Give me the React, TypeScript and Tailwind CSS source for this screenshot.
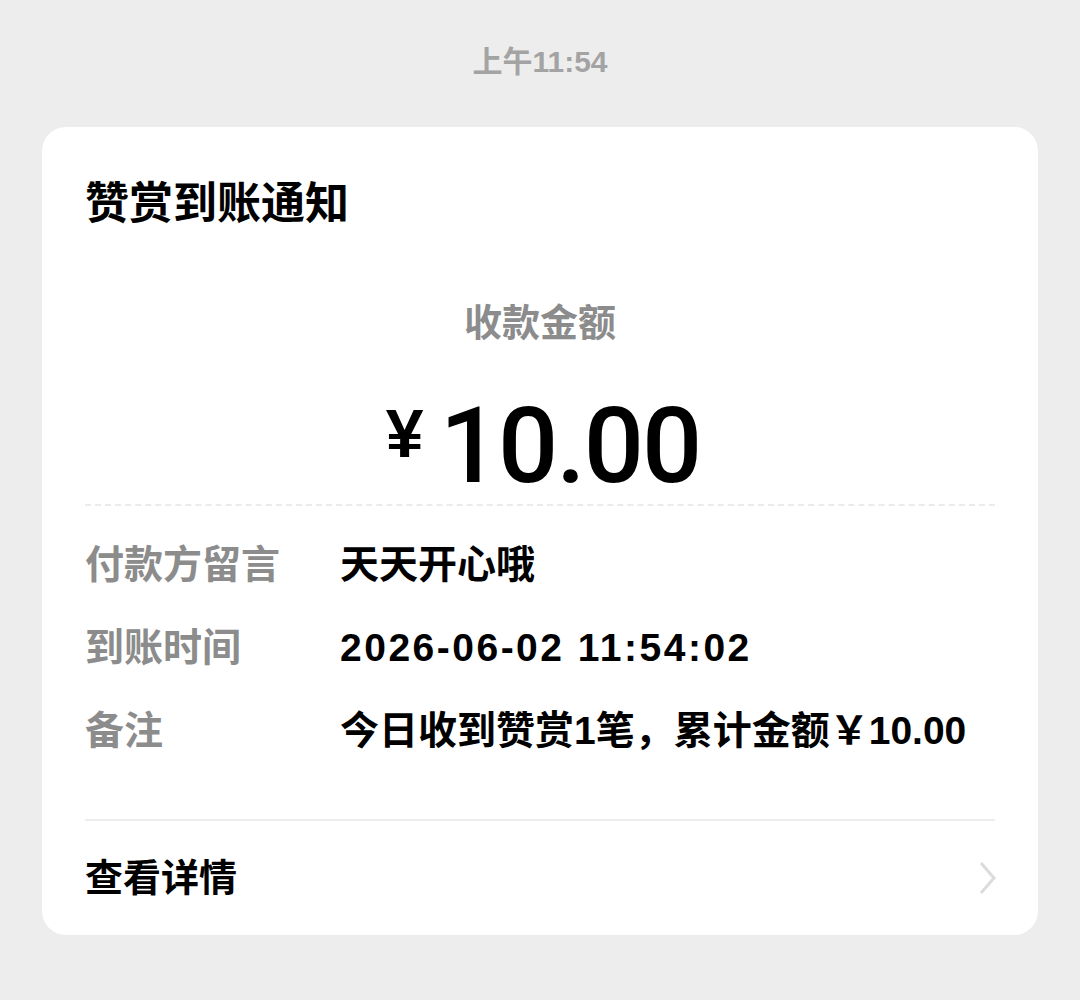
const cjk = "font-['Liberation_Sans','Noto_Sans_CJK_SC',sans-serif]";

function Row({ label, value, wide }: { label: string; value: string; wide?: boolean }) {
  return (
    <div className="flex h-[83px] items-center">
      <span className="w-[255px] shrink-0 text-[39px] font-bold text-[#8c8c8c]">
        {label}
      </span>
      <span className={`text-[39px] font-bold text-black ${wide ? "tracking-[2.5px]" : ""}`}>
        {value}
      </span>
    </div>
  );
}

export default function App() {
  return (
    <div className={`min-h-screen bg-[#ededed] pt-[42px] ${cjk}`}>
      <p className="text-center text-[30px] font-bold leading-[40px] text-[#a3a3a3]">
        上午11:54
      </p>
      <div className="mx-[42px] mt-[45px] rounded-[24px] bg-white px-[43px]">
        <h1 className="pt-[52px] text-[44px] font-bold leading-[50px] text-black">
          赞赏到账通知
        </h1>
        <p className="mt-[69px] text-center text-[38px] font-bold leading-[50px] text-[#8c8c8c]">
          收款金额
        </p>
        <div className="mt-[48px] flex items-start justify-center pl-[6px]">
          <span className="mt-[3px] mr-[16px] text-[68px] font-bold leading-none text-black">
            ¥
          </span>
          <span className="font-['Roboto',sans-serif] text-[106px] font-medium leading-[100px] tracking-[-2px] text-black">
            10.00
          </span>
        </div>
        <div className="mt-[8px] border-t-2 border-dashed border-[#ebebeb]" />
        <div className="pt-[18px]">
          <Row label="付款方留言" value="天天开心哦" />
          <Row label="到账时间" value="2026-06-02 11:54:02" wide />
          <Row label="备注" value="今日收到赞赏1笔，累计金额￥10.00" />
        </div>
        <div className="mt-[46px] border-t-2 border-[#ececec]" />
        <div className="flex h-[114px] items-center justify-between">
          <span className="text-[38px] font-bold text-black">查看详情</span>
          <svg width="18" height="34" viewBox="0 0 18 34" fill="none" className="-mr-[2px]">
            <path d="M2 2 L15 17 L2 32" stroke="#dcdcdc" strokeWidth="3" />
          </svg>
        </div>
      </div>
    </div>
  );
}
